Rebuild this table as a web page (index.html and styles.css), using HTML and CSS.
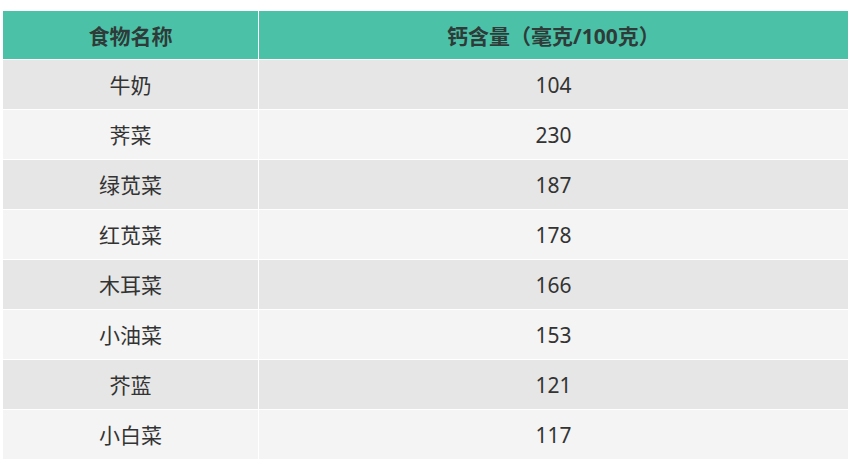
FILE: index.html
```html
<!DOCTYPE html>
<html lang="zh">
<head>
<meta charset="utf-8">
<link rel="stylesheet" href="styles.css">
</head>
<body>
<table class="calcium">
  <thead>
    <tr><th class="col-name">食物名称</th><th>钙含量（毫克/100克）</th></tr>
  </thead>
  <tbody>
    <tr><td>牛奶</td><td>104</td></tr>
    <tr><td>荠菜</td><td>230</td></tr>
    <tr><td>绿苋菜</td><td>187</td></tr>
    <tr><td>红苋菜</td><td>178</td></tr>
    <tr><td>木耳菜</td><td>166</td></tr>
    <tr><td>小油菜</td><td>153</td></tr>
    <tr><td>芥蓝</td><td>121</td></tr>
    <tr><td>小白菜</td><td>117</td></tr>
  </tbody>
</table>
</body>
</html>
```
FILE: styles.css
```css
html, body {
  margin: 0;
  padding: 0;
  background: #ffffff;
}
body {
  padding: 11px 0 0 3px;
  font-family: "Noto Sans", "Noto Sans CJK SC", sans-serif;
  color: #333333;
}
.calcium {
  border-collapse: collapse;
  width: 845px;
  table-layout: fixed;
}
.calcium th,
.calcium td {
  text-align: center;
  padding: 2px 0 0;
  line-height: 1;
  border-right: 1px solid #ffffff;
  border-bottom: 1px solid #ffffff;
}
.calcium th:last-child,
.calcium td:last-child {
  border-right: none;
}
.calcium .col-name {
  width: 255px;
}
.calcium th {
  background: #4bc2a8;
  height: 46px;
  font-size: 21px;
  font-weight: bold;
  color: #2f3b38;
}
.calcium td {
  height: 47px;
  font-size: 21px;
  color: #333333;
}
.calcium tbody tr:nth-child(odd) td {
  background: #e6e6e6;
}
.calcium tbody tr:nth-child(even) td {
  background: #f4f4f4;
}
```
